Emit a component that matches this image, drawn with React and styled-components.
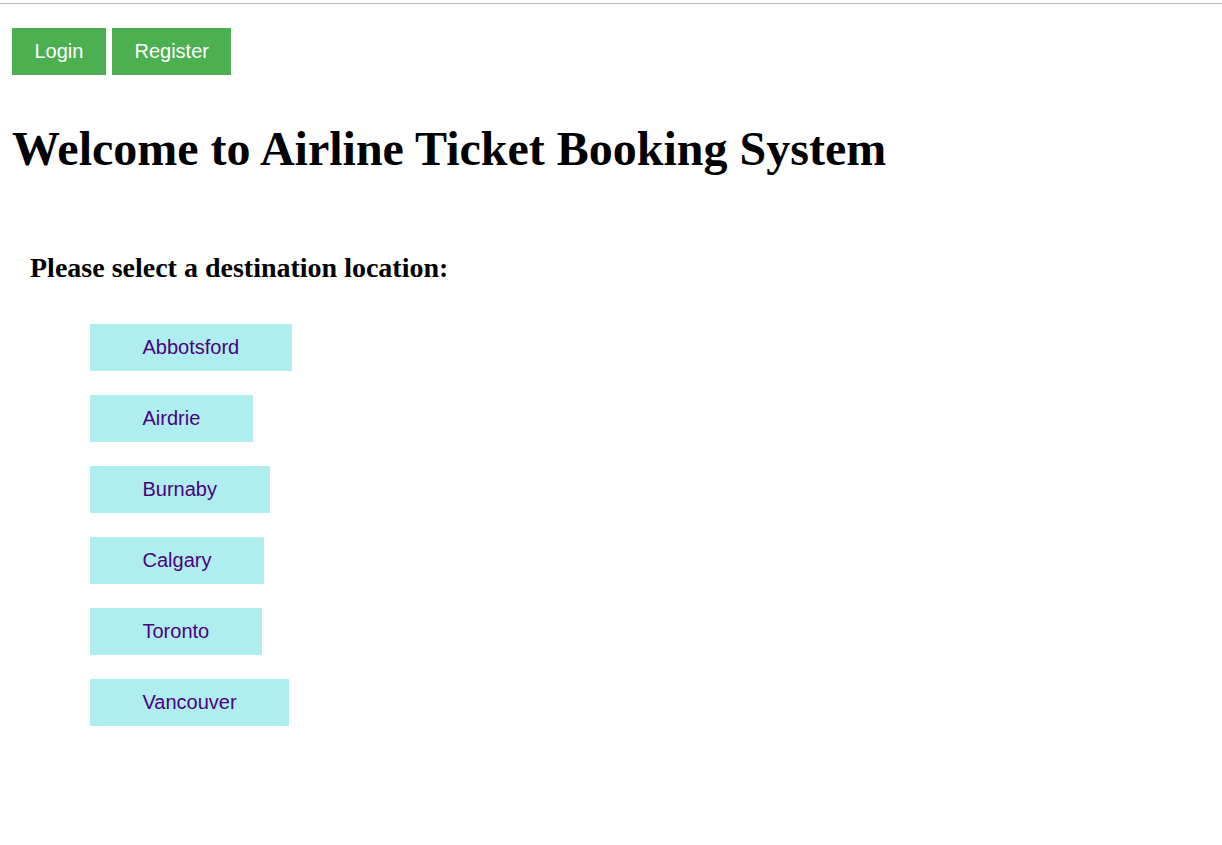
import styled, { createGlobalStyle } from "styled-components";

const GlobalStyle = createGlobalStyle`
  body {
    margin: 0;
    font-family: "Liberation Serif", "Times New Roman", serif;
    background: #fff;
  }
`;

const TopLine = styled.div`
  margin-top: 3px;
  height: 1px;
  background: #bdbdbd;
`;

const Page = styled.div`
  padding: 24px 12px 40px 12px;
`;

const NavBar = styled.div`
  display: flex;
  gap: 6px;
`;

const NavButton = styled.button`
  background: #4caf50;
  border: none;
  color: #fff;
  font-family: "Liberation Sans", Arial, sans-serif;
  font-size: 20px;
  line-height: 23px;
  padding: 12px 22.5px;
  cursor: pointer;
`;

const Title = styled.h1`
  font-size: 48px;
  font-weight: bold;
  margin: 46px 0 0 0;
`;

const Section = styled.div`
  padding-left: 18px;
  margin-top: 76px;
`;

const SubTitle = styled.h2`
  font-size: 28px;
  line-height: 32px;
  margin: 0;
`;

const DestList = styled.div`
  display: flex;
  flex-direction: column;
  align-items: flex-start;
  gap: 24px;
  margin-top: 40px;
  padding-left: 60px;
`;

const DestButton = styled.button`
  background: #afeeee;
  border: none;
  color: #4b0082;
  font-family: "Liberation Sans", Arial, sans-serif;
  font-size: 20px;
  line-height: 23px;
  padding: 12px 52.5px;
  cursor: pointer;
`;

const destinations = [
  "Abbotsford",
  "Airdrie",
  "Burnaby",
  "Calgary",
  "Toronto",
  "Vancouver",
];

const App = () => {
  return (
    <>
      <GlobalStyle />
      <TopLine />
      <Page>
        <NavBar>
          <NavButton>Login</NavButton>
          <NavButton>Register</NavButton>
        </NavBar>
        <Title>Welcome to Airline Ticket Booking System</Title>
        <Section>
          <SubTitle>Please select a destination location:</SubTitle>
          <DestList>
            {destinations.map((d) => (
              <DestButton key={d}>{d}</DestButton>
            ))}
          </DestList>
        </Section>
      </Page>
    </>
  );
};

export default App;
